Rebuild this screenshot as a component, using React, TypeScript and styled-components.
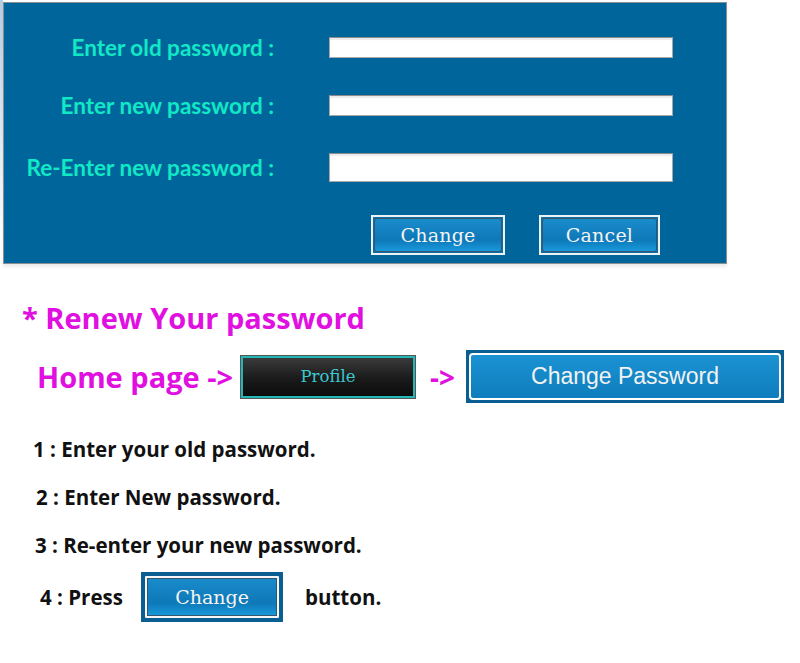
import styled, { createGlobalStyle } from "styled-components";

const GlobalStyle = createGlobalStyle`
  html, body {
    margin: 0;
    padding: 0;
    background: #ffffff;
  }
  body {
    font-family: "Open Sans", "Liberation Sans", sans-serif;
  }
`;

const fields = [
  { label: "Enter old password :", height: 21 },
  { label: "Enter new password :", height: 21 },
  { label: "Re-Enter new password :", height: 29 },
];

const steps = [
  { text: "1 : Enter your old password.", indent: 33 },
  { text: "2 : Enter New password.", indent: 36 },
  { text: "3 : Re-enter your new password.", indent: 35 },
];

function App() {
  return (
    <Page>
      <GlobalStyle />
      <Panel>
        <Form>
          {fields.map((f) => (
            <Field key={f.label}>
              <Label>{f.label}</Label>
              <Input type="password" $height={f.height} />
            </Field>
          ))}
        </Form>
        <Actions>
          <PanelButton $width={134}>
            <Face>Change</Face>
          </PanelButton>
          <PanelButton $width={121}>
            <Face>Cancel</Face>
          </PanelButton>
        </Actions>
      </Panel>

      <Heading>* Renew Your password</Heading>

      <NavRow>
        <NavText>Home page -&gt;</NavText>
        <ProfileButton>Profile</ProfileButton>
        <Arrow>-&gt;</Arrow>
        <ChangePasswordButton>
          <ChangePasswordFace>Change Password</ChangePasswordFace>
        </ChangePasswordButton>
      </NavRow>

      <Steps>
        {steps.map((s) => (
          <Step key={s.text} $indent={s.indent}>
            {s.text}
          </Step>
        ))}
        <LastStep $indent={40}>
          <PressText>4 : Press</PressText>
          <InlineButton>
            <InlineFace>Change</InlineFace>
          </InlineButton>
          <ButtonWord>button.</ButtonWord>
        </LastStep>
      </Steps>
    </Page>
  );
}

export default App;

const Page = styled.div`
  width: 800px;
  height: 663px;
  overflow: hidden;
  background: linear-gradient(180deg, #b4cfe4 0px, #ffffff 240px) no-repeat 0 0 / 3px 260px;
`;

const Panel = styled.div`
  box-sizing: border-box;
  margin: 2px 0 0 3px;
  width: 724px;
  height: 262px;
  background: #00659a;
  border: 1px solid #8a8f94;
  box-shadow: 0 3px 3px rgba(0, 0, 0, 0.08);
  padding-top: 34px;
`;

const Form = styled.div`
  display: flex;
  flex-direction: column;
  gap: 37px;
`;

const Field = styled.div`
  display: grid;
  grid-template-columns: 270px 344px;
  column-gap: 55px;
  align-items: center;
`;

const Label = styled.span`
  text-align: right;
  font-family: Lato, "DejaVu Sans", sans-serif;
  font-weight: 700;
  font-size: 22.5px;
  color: #10e8c6;
  line-height: 20px;
  white-space: nowrap;
`;

const Input = styled.input<{ $height: number }>`
  box-sizing: border-box;
  height: ${(p) => p.$height}px;
  width: 344px;
  margin: 0;
  background: #ffffff;
  border: 1px solid #a8a8a8;
  border-top-color: #8c8c8c;
  box-shadow: inset 0 2px 1px rgba(0, 0, 0, 0.08);
  outline: none;
  padding: 0 4px;
`;

const Actions = styled.div`
  display: flex;
  gap: 34px;
  margin: 33px 0 0 367px;
`;

const PanelButton = styled.button<{ $width: number }>`
  box-sizing: border-box;
  width: ${(p) => p.$width}px;
  height: 40px;
  padding: 0;
  border: 2px solid #eef1f3;
  background: #0d6fa6;
  display: flex;
  cursor: pointer;
`;

const Face = styled.span`
  flex: 1;
  display: flex;
  align-items: center;
  justify-content: center;
  margin: 1px;
  border: 1px solid #34566c;
  border-radius: 3px;
  background: linear-gradient(#1a8ccc 0%, #0e78b8 65%, #1899dc 100%);
  font-family: "DejaVu Serif", "Liberation Serif", serif;
  font-size: 19px;
  color: #f4f4f4;
  letter-spacing: 0.2px;
`;

const Heading = styled.h1`
  margin: 37px 0 0 22px;
  font-family: "Open Sans", "Liberation Sans", sans-serif;
  font-weight: 700;
  font-size: 29px;
  line-height: 34px;
  color: #e010e0;
`;

const NavRow = styled.div`
  display: flex;
  align-items: center;
  margin: 15px 0 0 37px;
  height: 53px;
`;

const NavText = styled.span`
  font-family: "Open Sans", "Liberation Sans", sans-serif;
  font-weight: 700;
  font-size: 29px;
  color: #e010e0;
  width: 204px;
  white-space: nowrap;
`;

const ProfileButton = styled.button`
  box-sizing: border-box;
  width: 174px;
  height: 42px;
  padding: 0;
  border: 2px solid #22b8b8;
  outline: 1px solid #555;
  background: linear-gradient(#3a3a3a, #1a1a1a 55%, #0c0c0c);
  font-family: "DejaVu Serif", "Liberation Serif", serif;
  font-size: 16.5px;
  color: #3cc9d2;
  cursor: pointer;
`;

const Arrow = styled.span`
  font-family: "Open Sans", "Liberation Sans", sans-serif;
  font-weight: 700;
  font-size: 28px;
  color: #e010e0;
  width: 36px;
  margin-left: 15px;
  white-space: nowrap;
`;

const ChangePasswordButton = styled.button`
  box-sizing: border-box;
  width: 318px;
  height: 53px;
  padding: 3px;
  border: none;
  background: #0a5e91;
  display: flex;
  cursor: pointer;
`;

const ChangePasswordFace = styled.span`
  flex: 1;
  display: flex;
  align-items: center;
  justify-content: center;
  border: 2px solid #ffffff;
  border-radius: 4px;
  background: linear-gradient(#1b92d2, #0f7dbd);
  font-family: "Liberation Sans", Arial, sans-serif;
  font-size: 23px;
  color: #f2f2f2;
`;

const Steps = styled.div`
  margin-top: 22px;
  display: flex;
  flex-direction: column;
`;

const Step = styled.div<{ $indent: number }>`
  padding-left: ${(p) => p.$indent}px;
  height: 48px;
  line-height: 48px;
  font-family: "Open Sans", "Liberation Sans", sans-serif;
  font-weight: 700;
  font-size: 20.5px;
  color: #111111;
  white-space: nowrap;
`;

const LastStep = styled(Step)`
  display: flex;
  align-items: center;
  height: 50px;
  line-height: normal;
  margin-top: 3px;
`;

const PressText = styled.span`
  width: 101px;
`;

const ButtonWord = styled.span`
  margin-left: 22px;
`;

const InlineButton = styled.button`
  box-sizing: border-box;
  width: 142px;
  height: 50px;
  padding: 4px;
  border: none;
  background: #0a5e91;
  display: flex;
  cursor: pointer;
`;

const InlineFace = styled.span`
  flex: 1;
  display: flex;
  align-items: center;
  justify-content: center;
  border: 2px solid #f4f6f8;
  background: linear-gradient(#1a8ccc 0%, #0e78b8 65%, #1899dc 100%);
  box-shadow: inset 0 0 0 1px #34566c;
  border-radius: 1px;
  font-family: "DejaVu Serif", "Liberation Serif", serif;
  font-weight: 400;
  font-size: 19px;
  color: #f4f4f4;
`;
